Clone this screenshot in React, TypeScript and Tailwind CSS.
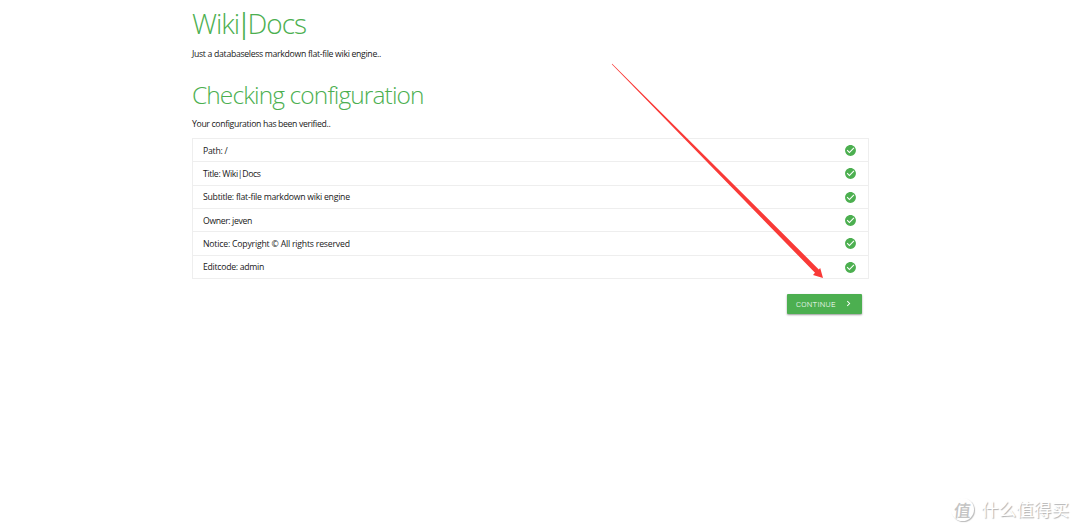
import { MdCheckCircle, MdChevronRight } from "react-icons/md";

const checks = [
  { text: "Path: /", style: "tracking-[-0.25px]" },
  { text: "Title: Wiki|Docs", style: "tracking-[-0.35px]" },
  { text: "Subtitle: flat-file markdown wiki engine", style: "tracking-[-0.25px]" },
  { text: "Owner: jeven", style: "tracking-[-0.38px]" },
  { text: "Notice: Copyright © All rights reserved", style: "tracking-[-0.2px]" },
  { text: "Editcode: admin", style: "tracking-[-0.28px]" },
];

function Arrow() {
  return (
    <svg
      className="pointer-events-none absolute top-0 left-0"
      width="1080"
      height="532"
      viewBox="0 0 1080 532"
      aria-hidden="true"
    >
      <path
        d="M612.2 63.8 L818.8 269.4 L820.2 268 L823 278 L813 275 L815 272.8 L611.8 64.2 Z"
        fill="#f93a37"
      />
    </svg>
  );
}

function Watermark() {
  return (
    <div className="absolute top-[497px] left-[951px] flex items-center gap-[7px] font-['Noto_Sans_CJK_SC',sans-serif] text-white">
      <span className="grid size-[23px] place-items-center rounded-full text-[17px] leading-none text-[#c4c4c4] shadow-[1px_1px_1px_#bbb]">
        <span className="-skew-x-6 font-medium">值</span>
      </span>
      <span className="text-[17.6px] leading-[24px] whitespace-nowrap [text-shadow:1px_1px_1px_#b0b0b0]">
        什么值得买
      </span>
    </div>
  );
}

export default function App() {
  return (
    <main className="relative h-[532px] w-[1080px] overflow-hidden bg-white font-['Open_Sans','Noto_Sans',sans-serif] text-[8.7px] text-[#202020]">
      <div className="ml-[192px] w-[677px]">
        <h1 className="flex h-[43px] pt-[3px] text-[28px] leading-[40px] font-light tracking-[-1px] text-[#4caf50]">
          <span>Wiki</span>
          <span className="ml-[1px] pt-[2px] font-['Roboto'] text-[33px] tracking-normal">|</span>
          <span>Docs</span>
        </h1>
        <p className="mt-[4px] leading-[14px] tracking-[-0.31px]">
          Just a databaseless markdown flat-file wiki engine..
        </p>
        <h2 className="mt-[16px] text-[24.5px] leading-[36px] font-light tracking-[-0.9px] text-[#4caf50]">
          Checking configuration
        </h2>
        <p className="mt-[4px] leading-[14px] tracking-[-0.35px]">Your configuration has been verified..</p>

        <ul className="mt-[7px] border border-[#eeeeee]">
          {checks.map(({ text, style }) => (
            <li
              key={text}
              className="flex h-[23.33px] items-center justify-between border-b border-[#eeeeee] pt-[1px] pr-[11px] pl-[10px] last:h-[22.35px] last:border-b-0"
            >
              <span className={`pt-[1px] ${style}`}>{text}</span>
              <MdCheckCircle className="size-[13px] text-[#4caf50]" />
            </li>
          ))}
        </ul>

        <div className="mt-[15px] flex justify-end pr-[7px]">
          <button className="flex h-[20px] w-[75px] items-center justify-between rounded-[1px] bg-[#4caf50] pr-[8px] pl-[9px] text-white shadow-[0_1px_2px_rgba(0,0,0,0.4)]">
            <span className="pt-[1px] font-['Roboto'] text-[7.8px] font-light tracking-[0.25px]">CONTINUE</span>
            <MdChevronRight className="size-[11px]" />
          </button>
        </div>
      </div>
      <Arrow />
      <Watermark />
    </main>
  );
}
